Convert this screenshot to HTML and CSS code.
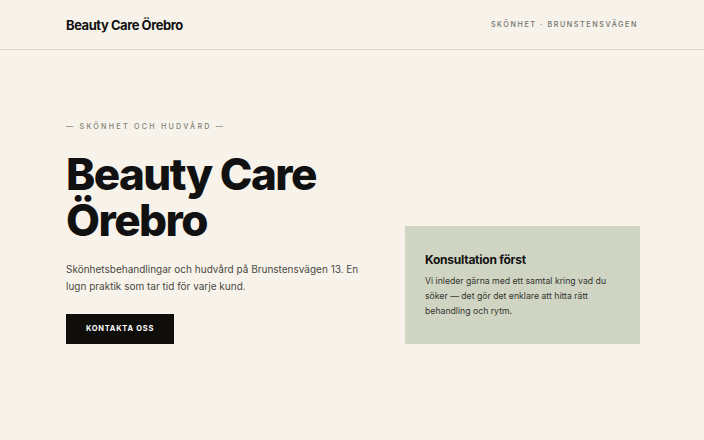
FILE: index.html
```html
<!DOCTYPE html>
<html lang="sv">
<head>
<meta charset="utf-8">
<title>Beauty Care Örebro</title>
<link rel="stylesheet" href="styles.css">
</head>
<body>
  <header class="site-header">
    <div class="wrap header-inner">
      <a class="logo" href="#">Beauty Care Örebro</a>
      <span class="nav-note">Skönhet · Brunstensvägen</span>
    </div>
  </header>
  <main class="wrap hero">
    <div class="hero-main">
      <p class="eyebrow">— Skönhet och hudvård —</p>
      <h1 class="title">Beauty Care<br>Örebro</h1>
      <p class="lead">Skönhetsbehandlingar och hudvård på Brunstensvägen 13. En lugn praktik som tar tid för varje kund.</p>
      <a class="btn" href="#">Kontakta oss</a>
    </div>
    <aside class="card">
      <h2 class="card-title">Konsultation först</h2>
      <p class="card-text">Vi inleder gärna med ett samtal kring vad du söker — det gör det enklare att hitta rätt behandling och rytm.</p>
    </aside>
  </main>
</body>
</html>
```

FILE: styles.css
```css
* { box-sizing: border-box; }

body {
  margin: 0;
  background: #f7f3eb;
  color: #111;
  font-family: Inter, "Noto Sans", sans-serif;
}

.wrap {
  padding: 0 64px;
}

.site-header {
  border-bottom: 1px solid #ddd8cd;
}

.header-inner {
  height: 49px;
  display: flex;
  align-items: center;
  justify-content: space-between;
}

.logo {
  font-size: 13px;
  font-weight: 700;
  letter-spacing: -0.035em;
  color: #111;
  text-decoration: none;
  margin-left: 2px;
}

.nav-note {
  font-size: 7.2px;
  font-weight: 500;
  letter-spacing: 0.22em;
  text-transform: uppercase;
  color: #6f706a;
  margin-right: 2px;
}

.hero {
  display: grid;
  grid-template-columns: 1fr 235px;
  gap: 24px;
  align-items: end;
  padding-top: 72px;
}

.hero-main {
  padding-left: 2px;
}

.eyebrow {
  margin: 0;
  font-size: 7.2px;
  font-weight: 500;
  letter-spacing: 0.31em;
  text-transform: uppercase;
  color: #7f8075;
}

.title {
  margin: 20px 0 0;
  font-size: 44px;
  line-height: 46px;
  font-weight: 800;
  letter-spacing: -0.035em;
  color: #111;
}

.lead {
  margin: 18px 0 0;
  max-width: 300px;
  font-size: 10px;
  line-height: 17px;
  color: #4a4943;
}

.btn {
  display: inline-block;
  margin-top: 19px;
  width: 108px;
  height: 30px;
  line-height: 30px;
  text-align: center;
  background: #100e0b;
  color: #fff;
  font-size: 7.5px;
  font-weight: 700;
  letter-spacing: 0.1em;
  text-transform: uppercase;
  text-decoration: none;
}

.card {
  background: #d0d4c3;
  padding: 26px 20px 25px;
}

.card-title {
  margin: 0;
  font-size: 12px;
  font-weight: 700;
  letter-spacing: -0.02em;
  color: #111;
}

.card-text {
  margin: 7px 0 0;
  font-size: 8.7px;
  line-height: 15px;
  color: #34342f;
}
```
